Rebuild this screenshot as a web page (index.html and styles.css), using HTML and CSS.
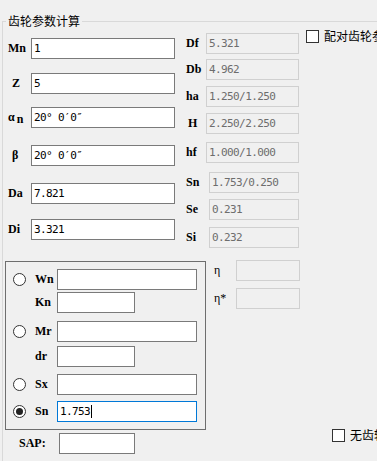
FILE: index.html
```html
<!doctype html>
<html>
    <head>
        <meta charset="utf-8">
        <link rel="stylesheet" href="styles.css">
    </head>
    <body>
    <fieldset class="group">
        <legend class="group-title">齿轮参数计算</legend>
        <div class="panel">

            <div class="params">
                <div class="field"><span class="lbl">Mn</span><div class="edit">1</div></div>
                <div class="field"><span class="lbl lbl-z">Z</span><div class="edit">5</div></div>
                <div class="field"><span class="lbl">α<span class="sub">n</span></span><div class="edit">20° 0′0″</div></div>
                <div class="field"><span class="lbl lbl-z">β</span><div class="edit">20° 0′0″</div></div>
                <div class="field"><span class="lbl">Da</span><div class="edit">7.821</div></div>
                <div class="field"><span class="lbl">Di</span><div class="edit">3.321</div></div>
            </div>

            <div class="results">
                <div class="out"><span class="lbl">Df</span><div class="ro">5.321</div></div>
                <div class="out"><span class="lbl">Db</span><div class="ro">4.962</div></div>
                <div class="out"><span class="lbl">ha</span><div class="ro">1.250/1.250</div></div>
                <div class="out"><span class="lbl lbl-h">H</span><div class="ro">2.250/2.250</div></div>
                <div class="out"><span class="lbl">hf</span><div class="ro">1.000/1.000</div></div>
                <div class="out out-s"><span class="lbl">Sn</span><div class="ro">1.753/0.250</div></div>
                <div class="out out-s"><span class="lbl">Se</span><div class="ro">0.231</div></div>
                <div class="out out-s"><span class="lbl">Si</span><div class="ro">0.232</div></div>
            </div>

            <div class="check pair"><span class="tick"></span>配对齿轮参数</div>

            <div class="modes">
                <div class="mode"><span class="radio"></span><span class="lbl">Wn</span><div class="edit wide"></div></div>
                <div class="mode"><span></span><span class="lbl">Kn</span><div class="edit short"></div></div>
                <div class="mode"><span class="radio"></span><span class="lbl">Mr</span><div class="edit wide"></div></div>
                <div class="mode"><span></span><span class="lbl">dr</span><div class="edit short"></div></div>
                <div class="mode"><span class="radio"></span><span class="lbl">Sx</span><div class="edit wide"></div></div>
                <div class="mode"><span class="radio on"></span><span class="lbl">Sn</span><div class="edit wide focus">1.753<span class="caret"></span></div></div>
            </div>

            <div class="eff">
                <div class="out"><span class="lbl">η</span><div class="ro"></div></div>
                <div class="out"><span class="lbl">η*</span><div class="ro"></div></div>
            </div>

            <div class="sap"><span class="lbl">SAP:</span><div class="edit short"></div></div>

            <div class="check nogear"><span class="tick"></span>无齿轮参数</div>
        </div>
    </fieldset>
    </body>
</html>
```

FILE: styles.css
```css
html, body {
    margin: 0;
    height: 100%;
    overflow: hidden;
    background: #f0f0f0;
}
body {
    font-family: "Noto Sans CJK SC", sans-serif;
    font-size: 12px;
    color: #000;
}

.group {
    margin: 14px 0 0 2px;
    padding: 1px 0 0 2px;
    border: 1px solid #d9d9d9;
    width: 470px;
    height: 520px;
    min-width: 0;
    box-sizing: border-box;
}
.group-title {
    margin-left: 1px;
    padding: 0 2px;
    line-height: 14px;
}

.panel {
    display: grid;
    grid-template-columns: 181px 19px 95px 1fr;
    grid-template-rows: auto auto auto;
}

.lbl {
    font-family: "Liberation Serif", serif;
    font-weight: bold;
    font-size: 12px;
    white-space: nowrap;
}
.sub {
    position: relative;
    top: 2px;
    margin-left: 2px;
}

.edit, .ro {
    height: 21px;
    box-sizing: border-box;
    padding: 0 2px;
    display: flex;
    align-items: center;
    font-family: "DejaVu Sans Mono", monospace;
    font-size: 11px;
    letter-spacing: -0.6px;
    white-space: nowrap;
}
.edit {
    border: 1px solid #7a7a7a;
    background: #fff;
    color: #000;
}
.ro {
    border: 1px solid #d0d0d0;
    background: #f0f0f0;
    color: #6d6d6d;
}

/* left column */
.params {
    grid-column: 1;
    grid-row: 1;
    margin-top: 9px;
    display: grid;
    grid-template-rows: 35px 34px 38px 38px 36px 21px;
}
.field {
    display: flex;
    align-items: center;
    height: 21px;
}
.field .lbl {
    width: 23px;
    padding-left: 3px;
}
.field .lbl-z {
    width: 19px;
    padding-left: 7px;
}
.field .edit {
    width: 144px;
}

/* middle column */
.results {
    grid-column: 2 / 4;
    grid-row: 1;
    margin-top: 4px;
    display: grid;
    grid-template-rows: 26px 27px 27px 29px 30px 27px 28px 20px;
}
.out {
    display: flex;
    align-items: center;
    height: 21px;
}
.out .lbl {
    width: 20px;
}
.out .lbl-h {
    width: 18px;
    padding-left: 2px;
}
.out .ro {
    width: 93px;
}
.out-s .lbl {
    width: 23px;
}
.out-s .ro {
    width: 90px;
}

.eff {
    grid-column: 3 / 5;
    grid-row: 2;
    margin-top: 13px;
    display: grid;
    grid-template-rows: 28px 20px;
    align-self: start;
}
.eff .lbl {
    width: 22px;
    padding-left: 9px;
    font-weight: normal;
}
.eff .ro {
    width: 64px;
}

/* check boxes */
.check {
    display: flex;
    align-items: center;
    gap: 5px;
    white-space: nowrap;
    line-height: 14px;
}
.tick {
    width: 13px;
    height: 13px;
    box-sizing: border-box;
    border: 1px solid #333;
    background: #fff;
}
.pair {
    grid-column: 4;
    grid-row: 1;
    align-self: start;
    margin-left: 6px;
}
.nogear {
    grid-column: 4;
    grid-row: 2 / 4;
    align-self: end;
    margin-left: 32px;
    margin-bottom: 12px;
}

/* radio group */
.modes {
    grid-column: 1 / 3;
    grid-row: 2;
    margin-top: 14px;
    width: 201px;
    box-sizing: border-box;
    border: 1px solid #6e6e6e;
    padding: 7px 0 7px 7px;
    display: grid;
    grid-template-rows: 23px 29px 25px 28px 27px 21px;
}
.mode {
    display: flex;
    align-items: center;
    height: 21px;
}
.mode > span:first-child {
    width: 13px;
    margin-right: 9px;
}
.mode .lbl {
    width: 22px;
}
.radio {
    height: 13px;
    box-sizing: border-box;
    border: 1px solid #333;
    border-radius: 50%;
    background: #fff;
    display: flex;
    align-items: center;
    justify-content: center;
}
.radio.on::after {
    content: "";
    width: 7px;
    height: 7px;
    border-radius: 50%;
    background: #222;
}
.edit.wide {
    width: 140px;
}
.edit.short {
    width: 78px;
}
.edit.focus {
    border-color: #0078d7;
}
.caret {
    width: 1px;
    height: 13px;
    margin-left: 1px;
    background: #000;
}

.sap {
    grid-column: 1;
    grid-row: 3;
    margin-top: 3px;
    display: flex;
    align-items: center;
}
.sap .lbl {
    width: 40px;
    padding-left: 14px;
}
.sap .edit.short {
    width: 76px;
}
```
